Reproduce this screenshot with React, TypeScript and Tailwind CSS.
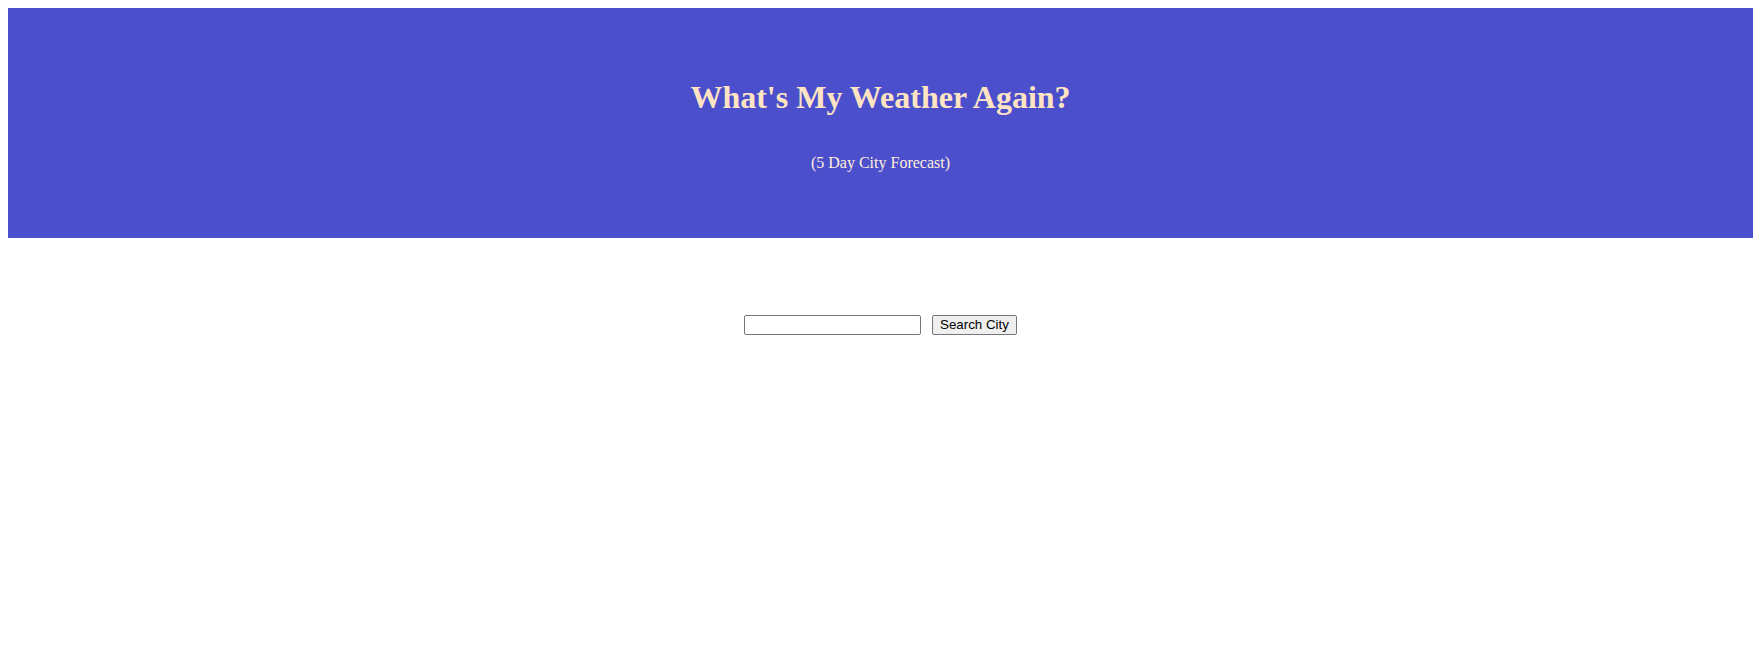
export default function App() {
  return (
    <div className="min-h-[654px] bg-white p-2" style={{ fontFamily: '"Liberation Serif", "Times New Roman", serif' }}>
      <header className="flex h-[230px] flex-col items-center bg-[#4b4fcb] pt-[71px]">
        <h1 className="m-0 text-[32px] font-bold leading-[37px] text-[#ffe4c4]">What's My Weather Again?</h1>
        <p className="m-0 mt-[38px] text-[16px] leading-[18px] text-[#fff0dc]">(5 Day City Forecast)</p>
      </header>
      <div className="mt-[77px] flex items-center justify-center gap-[11px]" style={{ fontFamily: '"Liberation Sans", Arial, sans-serif' }}>
        <input type="text" className="box-border h-[20px] w-[177px] rounded-[2px] border border-[#767676] bg-white px-[2px] text-[13.33px]" />
        <button className="box-border h-[20px] w-[85px] rounded-[2px] border border-[#767676] bg-[#efefef] p-0 text-[13.33px] leading-[18px] text-black">Search City</button>
      </div>
    </div>
  );
}
